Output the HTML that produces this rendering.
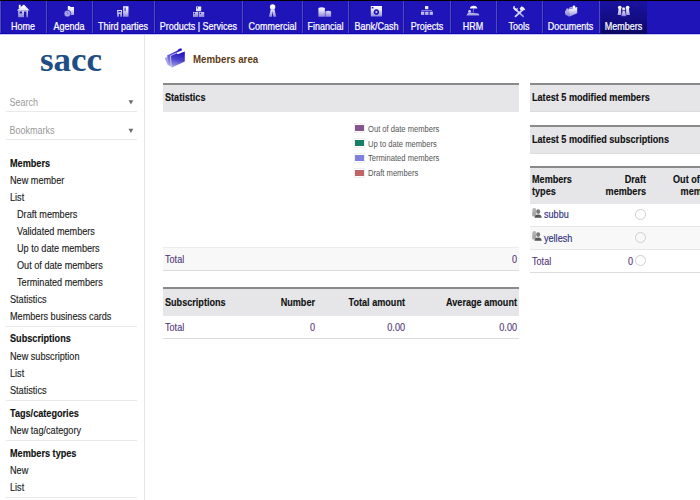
<!DOCTYPE html>
<html><head><meta charset="utf-8">
<style>
*{margin:0;padding:0;box-sizing:border-box}
html,body{width:700px;height:500px;overflow:hidden;background:#fff}
body{font-family:"Liberation Sans",sans-serif;color:#222;position:relative}
.a{position:absolute;white-space:nowrap}
#topline{position:absolute;left:0;top:0;width:700px;height:1px;background:#000}
#nav{position:absolute;left:0;top:1px;width:700px;height:33px;background:#1e14b8}
#navb1{position:absolute;left:0;top:33px;width:700px;height:1px;background:#1208b0}
#navb2{position:absolute;left:0;top:34px;width:700px;height:1px;background:#c8c4f0}
.sep{position:absolute;top:1px;width:2px;height:32px;background:linear-gradient(to right,#5450c6 0,#4a44c0 50%,#16109c 50%)}
.tab{position:absolute;top:1px;height:32px;text-align:center;color:#fff;font-size:9px;-webkit-text-stroke:0.2px #fff}
.tab span{position:absolute;left:-0.6px;right:0.6px;top:19.8px;line-height:10px;transform:scaleY(1.14);transform-origin:50% 2px}
.tab svg{position:absolute;top:4px}
#sel{position:absolute;left:600px;top:1px;width:47px;height:33.5px;background:linear-gradient(#1a12a0,#120c80 60%,#0c0860)}
#side{position:absolute;left:144px;top:35px;width:1px;height:465px;background:#e6e6e6}
.sl{position:absolute;left:10px;font-size:9.15px;line-height:10px;color:#1c1c1c;transform:scaleY(1.17);transform-origin:0 2px}
.sl.i{left:17px}
.sl,.td,.th{-webkit-text-stroke:0.12px currentColor}
.sl.h{font-weight:bold;color:#111}
.hr{position:absolute;left:6px;width:131px;height:1px;background:#e9e9e9}
.th{position:absolute;font-size:9.1px;font-weight:bold;line-height:10px;color:#111;transform:scaleY(1.14);transform-origin:0 2px}
.td{position:absolute;font-size:9.1px;line-height:10px;color:#55387a;transform:scaleY(1.14);transform-origin:0 2px}
.lg{position:absolute;left:368px;font-size:7.6px;line-height:9px;color:#555;transform:scaleY(1.1);transform-origin:0 2px}
.sw{position:absolute;left:354px;width:11px;height:10px;border:1px solid #eeeeee}
.circ{position:absolute;width:11px;height:11px;border:1.5px solid #cad3cf;border-radius:50%}
</style></head><body>
<div id="topline"></div>
<div id="nav"></div>
<div id="navb1"></div>
<div id="sel"></div>
<div id="navb2"></div>
<div class="sep" style="left:0"></div>

<div class="sep" style="left:46px"></div>
<div class="sep" style="left:92px"></div>
<div class="sep" style="left:154px"></div>
<div class="sep" style="left:242px"></div>
<div class="sep" style="left:302px"></div>
<div class="sep" style="left:348px"></div>
<div class="sep" style="left:403px"></div>
<div class="sep" style="left:450px"></div>
<div class="sep" style="left:496px"></div>
<div class="sep" style="left:542px"></div>
<div class="sep" style="left:599px"></div>
<div class="tab" style="left:1px;width:45px"><span>Home</span></div>
<div class="tab" style="left:47px;width:45px"><span>Agenda</span></div>
<div class="tab" style="left:93px;width:61px"><span>Third parties</span></div>
<div class="tab" style="left:155px;width:88px"><span>Products | Services</span></div>
<div class="tab" style="left:244px;width:58px"><span>Commercial</span></div>
<div class="tab" style="left:303px;width:46px"><span>Financial</span></div>
<div class="tab" style="left:350px;width:54px"><span>Bank/Cash</span></div>
<div class="tab" style="left:405px;width:45px"><span>Projects</span></div>
<div class="tab" style="left:451px;width:45px"><span>HRM</span></div>
<div class="tab" style="left:497px;width:45px"><span>Tools</span></div>
<div class="tab" style="left:543px;width:56px"><span>Documents</span></div>
<div class="tab" style="left:600px;width:48px"><span>Members</span></div>

<svg class="a" style="left:0;top:0" width="700" height="35" viewBox="0 0 700 35">
<defs>
<linearGradient id="ig" gradientUnits="userSpaceOnUse" x1="0" y1="5" x2="0" y2="17"><stop offset="0" stop-color="#ffffff"/><stop offset="0.4" stop-color="#e8e6fb"/><stop offset="1" stop-color="#8a84d6"/></linearGradient>
</defs>
<g fill="url(#ig)">
<!-- home -->
<path d="M16.8,10.6 L23.4,4.8 L24.2,4.8 L29.6,10.6 Z"/>
<rect x="18.8" y="4.8" width="1.9" height="3.4"/>
<path fill-rule="evenodd" d="M18.2,10.4 H28 V17.2 H18.2 Z M19.6,11.6 V13.6 H22 V11.6 Z M24,11.5 V17.2 H26.4 V11.5 Z"/>
<!-- agenda -->
<path d="M67.8,5.9 H69.8 L70.5,7.1 H74 V15 H67.8 Z"/>
<circle cx="67.4" cy="13.6" r="3.4" fill="#aaa6ee" stroke="#1e14b8" stroke-width="0.7"/>
<path d="M67.2,11.8 V13.8 H68.8" stroke="#5a52c8" stroke-width="0.6" fill="none"/>
<!-- third parties -->
<path fill-rule="evenodd" d="M117.1,9.9 H122 V16.8 H117.1 Z M118.2,11 V12.2 H121 V11 Z M119,14 V16.8 H120.2 V14 Z"/>
<path fill-rule="evenodd" d="M123.1,6.2 H128.5 V16.8 H123.1 Z M124.6,7.5 V11.2 H125.6 V7.5 Z"/>
<!-- products -->
<path fill-rule="evenodd" d="M196,6.5 H201.2 V11.3 H196 Z M196.8,7.3 V8.5 H198 V7.3 Z"/>
<path fill-rule="evenodd" d="M193,12 H198.3 V17 H193 Z M193.8,12.8 V14 H195 V12.8 Z"/>
<path fill-rule="evenodd" d="M199,12 H204.2 V17 H199 Z M199.8,12.8 V14 H201 V12.8 Z"/>
<!-- commercial -->
<circle cx="272.6" cy="6.9" r="2.7"/>
<path d="M270.7,9.2 L269,16.7 H271.9 L272.6,11 L273.3,16.7 H276.2 L274.5,9.2 Z"/>
<!-- financial -->
<path d="M318.4,8 Q321.6,6.6 324.9,8 V16.8 H318.4 Z"/>
<path d="M325.4,11.4 Q328.2,10 331.1,11.4 V16.8 H325.4 Z"/>
<!-- bank -->
<path fill-rule="evenodd" d="M370.8,5.9 H382 V16.6 H370.8 Z M371.8,6.9 V8.6 H373.4 V6.9 Z M376.4,9.3 A2.8,2.8 0 1 0 376.41,9.3 Z"/>
<circle cx="376.4" cy="12.1" r="1.1"/>
<!-- projects -->
<rect x="425" y="6.1" width="3.3" height="3.1"/>
<rect x="421.3" y="10" width="10.8" height="0.9" opacity="0.6"/>
<rect x="421" y="11.7" width="3.3" height="3.3"/>
<rect x="425.2" y="11.7" width="3.3" height="3.3"/>
<rect x="429.6" y="11.7" width="3.3" height="3.3"/>
<!-- hrm -->
<path d="M469.8,8.4 Q470.2,5.8 473.6,5.8 Q477,5.8 477.3,8.4 Z"/>
<path d="M473.6,8.2 L473.2,12.6" stroke="#9c98e0" stroke-width="0.7"/>
<circle cx="469.6" cy="11.3" r="1.3"/>
<path d="M466.4,15.4 L468.2,12.6 Q469.8,12 471.4,12.8 L478.2,13.6 Q479.5,14.4 479.2,15.4 Z"/>
<!-- tools -->
<path d="M515,9 L523.2,16.4" stroke="url(#ig)" stroke-width="1.7" stroke-linecap="round"/>
<path d="M523.5,9 L515.5,16.4" stroke="#d8d6f6" stroke-width="1.8" stroke-linecap="round"/>
<path d="M513,8.2 A2,2 0 0 1 515,6 L514.6,7.9 L516,9.1 L517.6,7.7 A2.2,2.2 0 0 1 515,10.6 Z"/>
<path d="M519.6,8.6 L521.6,6.3 Q524,7 525.2,9.6 L524,10.6 L522.2,9.4 L521,10.8 Z"/>
<!-- documents -->
<path d="M565,11 L569,9.3 L569.2,16.8 L565.2,14.4 Z" opacity="0.85"/>
<path d="M569,9.3 L577.2,7 V13.2 L569.2,16.8 Z"/>
<path d="M565.6,10.6 L566.6,8.6 L568.2,8.4 L568.6,9.4 Z" opacity="0.8"/>
<path d="M568.4,9.2 L569.6,7.6 L572.4,6.6 L573,7.8 Z" opacity="0.7"/>
<circle cx="574" cy="6.9" r="1.3" fill="#fff"/>
<!-- members -->
<circle cx="619.8" cy="7.6" r="1.9"/>
<circle cx="627.6" cy="7.6" r="1.9"/>
<path d="M618.6,9 L617.6,15 H621.4 L621,9 Z"/>
<path d="M626.2,9 L626,15 H629.9 L628.9,9 Z"/>
<circle cx="623.7" cy="9" r="1.9" stroke="#14108a" stroke-width="0.6"/>
<path d="M622.5,10.5 L621,16.3 H626.6 L625,10.5 Z" stroke="#14108a" stroke-width="0.5"/>
</g>
</svg>
<div id="side"></div>
<div class="a" style="left:40px;top:39px;font-family:'Liberation Serif',serif;font-weight:bold;font-size:34.6px;line-height:40px;color:#1f4e84;transform:scale(1.01,0.95);transform-origin:0 31px">sacc</div>
<div class="a" style="left:9.5px;top:96.5px;font-size:9px;line-height:10px;color:#9a9a9a;transform:scaleY(1.11);transform-origin:0 2px">Search</div>
<svg class="a" style="left:0;top:0" width="140" height="140"><path d="M128.5,100.2 H133.3 L130.9,104.4 Z" fill="#6e6e6e"/><path d="M128.5,128.8 H133.3 L130.9,133 Z" fill="#6e6e6e"/></svg>
<div class="hr" style="top:111px"></div>
<div class="a" style="left:9.5px;top:125px;font-size:9px;line-height:10px;color:#9a9a9a;transform:scaleY(1.11);transform-origin:0 2px">Bookmarks</div>

<div class="hr" style="top:139px"></div>

<div class="sl h" style="top:158px">Members</div>
<div class="sl" style="top:175px">New member</div>
<div class="sl" style="top:192px">List</div>
<div class="sl i" style="top:209px">Draft members</div>
<div class="sl i" style="top:226px">Validated members</div>
<div class="sl i" style="top:243px">Up to date members</div>
<div class="sl i" style="top:260px">Out of date members</div>
<div class="sl i" style="top:277px">Terminated members</div>
<div class="sl" style="top:294px">Statistics</div>
<div class="sl" style="top:311px">Members business cards</div>
<div class="hr" style="top:326px"></div>
<div class="sl h" style="top:333px">Subscriptions</div>
<div class="sl" style="top:351px">New subscription</div>
<div class="sl" style="top:368px">List</div>
<div class="sl" style="top:385px">Statistics</div>
<div class="hr" style="top:400px"></div>
<div class="sl h" style="top:408px">Tags/categories</div>
<div class="sl" style="top:425px">New tag/category</div>
<div class="hr" style="top:440px"></div>
<div class="sl h" style="top:448px">Members types</div>
<div class="sl" style="top:465px">New</div>
<div class="sl" style="top:482px">List</div>
<div class="hr" style="top:497px"></div>

<!-- title -->
<svg class="a" style="left:160px;top:44px" width="30" height="28" viewBox="160 44 30 28">
<defs><linearGradient id="fg" x1="0.55" y1="0" x2="0.35" y2="1"><stop offset="0" stop-color="#1c10c4"/><stop offset="0.5" stop-color="#4a42cc"/><stop offset="1" stop-color="#aaa6e8"/></linearGradient>
<linearGradient id="fb" x1="0.7" y1="0" x2="0.2" y2="1"><stop offset="0" stop-color="#1c10c4"/><stop offset="1" stop-color="#9c98e4"/></linearGradient></defs>
<path d="M164.6,58.2 L167.4,56.8 L170.6,66.8 L167.6,64.6 Z" fill="#a8a4e6"/>
<path d="M167,55.4 L177.6,50.4 L178.6,49 L181.4,48.2 L182,50.2 L170.4,55.6 L170.8,66.6 L168.6,62.4 Z" fill="url(#fb)"/>
<path d="M171,55.8 L176.8,53.2 L177.6,54.2 L184.8,51.4 V61.6 L171.4,67.8 Z" fill="url(#fg)"/>
</svg>
<div class="a" style="left:193px;top:53.5px;font-size:9.7px;line-height:10px;font-weight:bold;color:#5e3a14;transform:scaleY(1.1);transform-origin:0 2px">Members area</div>

<!-- stats table -->
<div class="a" style="left:163px;top:83px;width:356px;height:2px;background:#8a8a8a"></div>
<div class="a" style="left:163px;top:85px;width:356px;height:27px;background:#e6e6e9"></div>
<div class="th" style="left:165px;top:92px">Statistics</div>
<div class="sw" style="top:123px"><div style="margin-top:1px;height:6px;background:#84578c"></div></div>
<div class="lg" style="top:124px">Out of date members</div>
<div class="sw" style="top:138px"><div style="margin-top:1px;height:6px;background:#177f67"></div></div>
<div class="lg" style="top:139px">Up to date members</div>
<div class="sw" style="top:153px"><div style="margin-top:1px;height:6px;background:#8080dd"></div></div>
<div class="lg" style="top:153px">Terminated members</div>
<div class="sw" style="top:168px"><div style="margin-top:1px;height:6px;background:#be6666"></div></div>
<div class="lg" style="top:168px">Draft members</div>
<div class="a" style="left:163px;top:247px;width:356px;height:1px;background:#ececec"></div>
<div class="a" style="left:163px;top:248px;width:356px;height:22px;background:#f8f8f8"></div>
<div class="a" style="left:163px;top:270px;width:356px;height:1px;background:#dcdcdc"></div>
<div class="td" style="left:165px;top:254px">Total</div>
<div class="td" style="left:480px;width:37px;text-align:right;top:254px">0</div>

<!-- subs table -->
<div class="a" style="left:163px;top:287px;width:356px;height:2px;background:#8a8a8a"></div>
<div class="a" style="left:163px;top:289px;width:356px;height:27px;background:#e6e6e9"></div>
<div class="th" style="left:165px;top:297px">Subscriptions</div>
<div class="th" style="left:215px;width:100px;text-align:right;top:297px">Number</div>
<div class="th" style="left:305px;width:100px;text-align:right;top:297px">Total amount</div>
<div class="th" style="left:417px;width:100px;text-align:right;top:297px">Average amount</div>
<div class="td" style="left:165px;top:322px">Total</div>
<div class="td" style="left:215px;width:100px;text-align:right;top:322px">0</div>
<div class="td" style="left:305px;width:100px;text-align:right;top:322px">0.00</div>
<div class="td" style="left:417px;width:100px;text-align:right;top:322px">0.00</div>
<div class="a" style="left:163px;top:338px;width:356px;height:1px;background:#dcdcdc"></div>

<!-- right tables -->
<div class="a" style="left:530px;top:83px;width:170px;height:2px;background:#8a8a8a"></div>
<div class="a" style="left:530px;top:85px;width:170px;height:26px;background:#e6e6e9"></div>
<div class="a" style="left:530px;top:111px;width:170px;height:1px;background:#dcdcdc"></div>
<div class="th" style="left:532px;top:92px">Latest 5 modified members</div>

<div class="a" style="left:530px;top:125px;width:170px;height:2px;background:#8a8a8a"></div>
<div class="a" style="left:530px;top:127px;width:170px;height:26px;background:#e6e6e9"></div>
<div class="a" style="left:530px;top:153px;width:170px;height:1px;background:#dcdcdc"></div>
<div class="th" style="left:532px;top:134px">Latest 5 modified subscriptions</div>

<div class="a" style="left:530px;top:166px;width:170px;height:2px;background:#8a8a8a"></div>
<div class="a" style="left:530px;top:168px;width:170px;height:36px;background:#e6e6e9"></div>
<div class="th" style="left:532px;top:173.6px;line-height:11.1px">Members<br>types</div>
<div class="th" style="left:586px;width:60px;text-align:right;top:173.6px;line-height:11.1px;transform-origin:100% 2px">Draft<br>members</div>
<div class="th" style="left:661px;width:60px;text-align:right;top:173.6px;line-height:11.1px;transform-origin:100% 2px">Out of date<br>members</div>
<div class="a" style="left:530px;top:226px;width:170px;height:1px;background:#e6e6e6"></div>
<div class="a" style="left:530px;top:227px;width:170px;height:22px;background:#f8f8f8"></div>
<div class="a" style="left:530px;top:249px;width:170px;height:1px;background:#e6e6e6"></div>
<div class="a" style="left:530px;top:272px;width:170px;height:1px;background:#dcdcdc"></div>
<svg class="a" style="left:528px;top:204px" width="16" height="14" viewBox="0 0 16 14">
<ellipse cx="6.3" cy="6.3" rx="2" ry="2.3" fill="#b4b4b4"/><rect x="4.2" y="7.6" width="4" height="5" rx="1" fill="#a8a8a8"/>
<ellipse cx="10.2" cy="7.6" rx="2" ry="2.3" fill="#7a7a7a"/><path d="M6.5,13.8 Q6.8,10.4 10.2,10.4 Q13.5,10.4 13.8,13.8 Z" fill="#555"/></svg>
<div class="td" style="left:544px;top:209px;color:#2e2e7a">subbu</div>
<svg class="a" style="left:528px;top:227px" width="16" height="14" viewBox="0 0 16 14">
<ellipse cx="6.3" cy="6.3" rx="2" ry="2.3" fill="#b4b4b4"/><rect x="4.2" y="7.6" width="4" height="5" rx="1" fill="#a8a8a8"/>
<ellipse cx="10.2" cy="7.6" rx="2" ry="2.3" fill="#7a7a7a"/><path d="M6.5,13.8 Q6.8,10.4 10.2,10.4 Q13.5,10.4 13.8,13.8 Z" fill="#555"/></svg>
<div class="td" style="left:544px;top:233px;color:#2e2e7a">yellesh</div>
<div class="td" style="left:532px;top:256px">Total</div>
<div class="td" style="left:600px;width:33px;text-align:right;top:256px">0</div>
<div class="circ" style="left:635px;top:209px"></div>
<div class="circ" style="left:635px;top:232px"></div>
<div class="circ" style="left:635px;top:255px"></div>
</body></html>
